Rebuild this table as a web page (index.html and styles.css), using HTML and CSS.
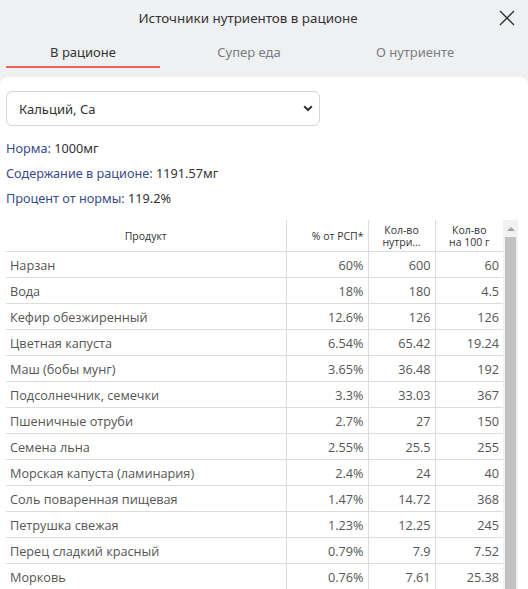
FILE: index.html
```html
<!DOCTYPE html>
<html lang="ru">
<head>
<meta charset="utf-8">
<title>Источники нутриентов в рационе</title>
<link rel="stylesheet" href="styles.css">
</head>
<body>
<div class="modal">
  <header class="head">
    <div class="title-bar">
      <div class="title">Источники нутриентов в рационе</div>
      <button class="close" aria-label="Закрыть">
        <svg width="16" height="16" viewBox="0 0 16 16"><path d="M1 1 L15 15 M15 1 L1 15" stroke="#2b2b2b" stroke-width="1.3" fill="none"/></svg>
      </button>
    </div>
    <nav class="tabs">
      <div class="tab active">В рационе</div>
      <div class="tab">Супер еда</div>
      <div class="tab">О нутриенте</div>
    </nav>
  </header>
  <main class="panel">
    <div class="select">
      <span>Кальций, Са</span>
      <svg width="10" height="7" viewBox="0 0 10 7"><path d="M1.2 1.2 L5 5 L8.8 1.2" stroke="#333" stroke-width="2" fill="none"/></svg>
    </div>
    <div class="stats">
      <div><span class="lbl">Норма:</span> 1000мг</div>
      <div><span class="lbl">Содержание в рационе:</span> 1191.57мг</div>
      <div><span class="lbl">Процент от нормы:</span> 119.2%</div>
    </div>
    <div class="grid-wrap">
      <table class="grid">
        <colgroup><col class="c1"><col class="c2"><col class="c3"><col class="c4"></colgroup>
        <thead>
          <tr><th class="center">Продукт</th><th class="right">% от РСП*</th><th class="center">Кол-во<br>нутри...</th><th class="center">Кол-во<br>на 100 г</th></tr>
        </thead>
        <tbody>
          <tr><td>Нарзан</td><td>60%</td><td>600</td><td>60</td></tr>
          <tr><td>Вода</td><td>18%</td><td>180</td><td>4.5</td></tr>
          <tr><td>Кефир обезжиренный</td><td>12.6%</td><td>126</td><td>126</td></tr>
          <tr><td>Цветная капуста</td><td>6.54%</td><td>65.42</td><td>19.24</td></tr>
          <tr><td>Маш (бобы мунг)</td><td>3.65%</td><td>36.48</td><td>192</td></tr>
          <tr><td>Подсолнечник, семечки</td><td>3.3%</td><td>33.03</td><td>367</td></tr>
          <tr><td>Пшеничные отруби</td><td>2.7%</td><td>27</td><td>150</td></tr>
          <tr><td>Семена льна</td><td>2.55%</td><td>25.5</td><td>255</td></tr>
          <tr><td>Морская капуста (ламинария)</td><td>2.4%</td><td>24</td><td>40</td></tr>
          <tr><td>Соль поваренная пищевая</td><td>1.47%</td><td>14.72</td><td>368</td></tr>
          <tr><td>Петрушка свежая</td><td>1.23%</td><td>12.25</td><td>245</td></tr>
          <tr><td>Перец сладкий красный</td><td>0.79%</td><td>7.9</td><td>7.52</td></tr>
          <tr><td>Морковь</td><td>0.76%</td><td>7.61</td><td>25.38</td></tr>
        </tbody>
      </table>
      <div class="scrollbar">
        <div class="arrow"></div>
        <div class="thumb"></div>
      </div>
    </div>
  </main>
</div>
</body>
</html>
```
FILE: styles.css
```css
html, body {
  margin: 0;
  padding: 0;
  overflow: hidden;
  background: #eff0f2;
}
body {
  font-family: "Noto Sans", "Open Sans", sans-serif;
  color: #333;
  font-size: 13px;
}
.modal {
  width: 528px;
  height: 589px;
  display: flex;
  flex-direction: column;
  overflow: hidden;
}
.head {
  background: #eff0f2;
  padding-bottom: 9px;
}
.title-bar {
  height: 36px;
  display: flex;
  align-items: center;
}
.title {
  flex: 1;
  text-align: center;
  font-size: 13.4px;
  color: #333;
}
.close {
  width: 22px;
  height: 22px;
  margin-right: 10px;
  padding: 0;
  border: 0;
  background: none;
  display: flex;
  align-items: center;
  justify-content: center;
}
.tabs {
  display: grid;
  grid-template-columns: 154px 154px 154px;
  column-gap: 12px;
  padding-left: 6px;
}
.tab {
  text-align: center;
  font-size: 13px;
  line-height: 18px;
  padding: 7px 0 5px;
  border-bottom: 2px solid transparent;
  color: #7a7d82;
}
.tab.active {
  color: #333;
  border-bottom-color: #e8665e;
}
.panel {
  flex: 1;
  background: #fff;
  border-radius: 8px 8px 0 0;
  padding: 14px 10px 0 6px;
}
.select {
  width: 314px;
  height: 35px;
  box-sizing: border-box;
  border: 1px solid #d6d6d6;
  border-radius: 6px;
  display: flex;
  align-items: center;
  justify-content: space-between;
  padding: 0 6px 0 12px;
  font-size: 13px;
  color: #333;
}
.stats {
  margin-top: 10px;
  line-height: 25px;
  font-size: 12.7px;
}
.lbl {
  color: #3a4a88;
}
.grid-wrap {
  margin-top: 9px;
  display: flex;
  align-items: flex-start;
}
.grid {
  width: 497px;
  table-layout: fixed;
  border-collapse: collapse;
  font-family: "Open Sans", "Noto Sans", sans-serif;
  color: #555;
}
.c1 { width: 280px; }
.c2 { width: 82px; }
.c3 { width: 67px; }
.c4 { width: 68px; }
.grid th {
  font-weight: normal;
  font-size: 10.5px;
  line-height: 12px;
  height: 31px;
  padding: 0 4px;
  color: #333;
  border-bottom: 1px solid #dcdcdc;
  border-left: 1px solid #dcdcdc;
}
.grid th:first-child { border-left: 0; }
.grid .center { text-align: center; }
.grid .right { text-align: right; }
.grid td {
  font-size: 12.7px;
  height: 25px;
  padding: 0 4px;
  border-bottom: 1px solid #dcdcdc;
  border-left: 1px solid #dcdcdc;
  text-align: right;
  white-space: nowrap;
}
.grid td:first-child {
  border-left: 0;
  text-align: left;
}
.scrollbar {
  width: 15px;
  height: 400px;
  background: #f1f1f1;
  flex: none;
}
.arrow {
  height: 17px;
  display: flex;
  align-items: center;
  justify-content: center;
}
.arrow::before {
  content: "";
  border-left: 4px solid transparent;
  border-right: 4px solid transparent;
  border-bottom: 4px solid #a3a3a3;
}
.thumb {
  margin: 0 2px;
  height: 380px;
  background: #c1c1c1;
}
```
